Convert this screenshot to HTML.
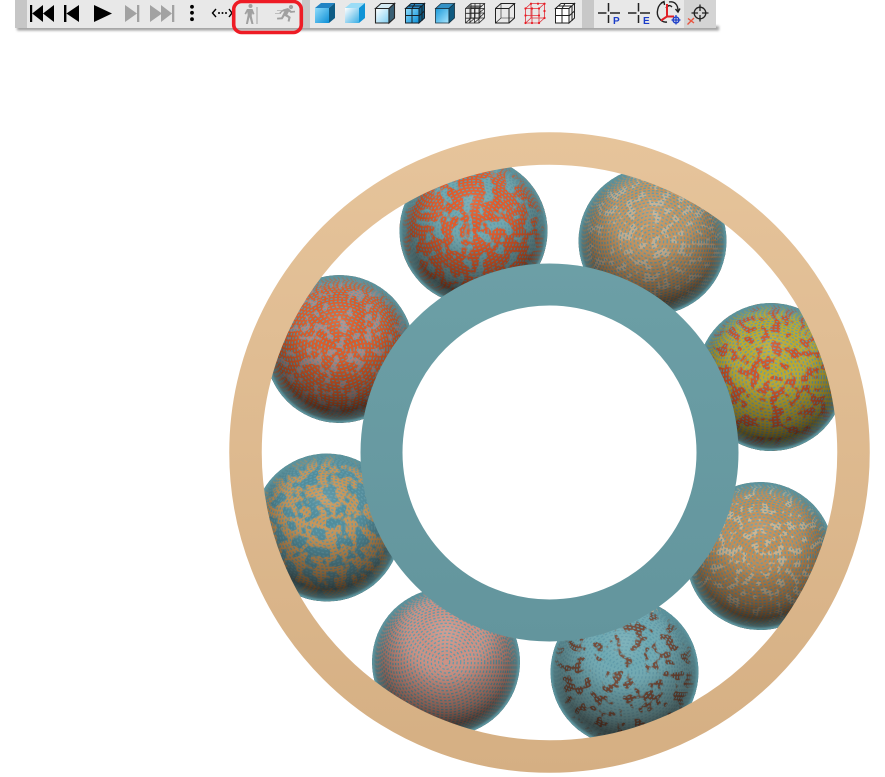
<!DOCTYPE html>
<html>
<head>
<meta charset="utf-8">
<style>
html,body{margin:0;padding:0;background:#fff;width:885px;height:777px;overflow:hidden}
svg{display:block}
</style>
</head>
<body>
<svg width="885" height="777" viewBox="0 0 885 777" xmlns="http://www.w3.org/2000/svg">
<defs>
  <linearGradient id="outer" gradientUnits="userSpaceOnUse" x1="0" y1="132" x2="0" y2="773"><stop offset="0" stop-color="#e6c49b"/><stop offset="1" stop-color="#d5af83"/></linearGradient>
  <linearGradient id="inner" gradientUnits="userSpaceOnUse" x1="0" y1="264" x2="0" y2="641"><stop offset="0" stop-color="#6c9fa6"/><stop offset="1" stop-color="#63959d"/></linearGradient>
  <radialGradient id="shade" cx=".5" cy=".3" r=".76">
    <stop offset="0" stop-color="#fff" stop-opacity=".12"/>
    <stop offset=".22" stop-color="#fff" stop-opacity="0"/>
    <stop offset=".45" stop-color="#1c0e06" stop-opacity=".14"/>
    <stop offset=".68" stop-color="#1c0e06" stop-opacity=".42"/>
    <stop offset=".85" stop-color="#140a04" stop-opacity=".72"/>
    <stop offset="1" stop-color="#0c0502" stop-opacity=".9"/>
  </radialGradient>
  <radialGradient id="rim" cx=".5" cy=".5" r=".5">
    <stop offset=".84" stop-color="#5b939d" stop-opacity="0"/>
    <stop offset=".95" stop-color="#5b939d" stop-opacity=".5"/>
    <stop offset=".985" stop-color="#5b939d" stop-opacity="1"/>
    <stop offset="1" stop-color="#5b939d" stop-opacity="1"/>
  </radialGradient>
  <g id="dashes" fill="none" stroke="#5f9aa9" stroke-width="1.3" stroke-dasharray="2.4 1.9">
    <circle r="3.7"/><circle r="7.4"/><circle r="11.1"/><circle r="14.7"/><circle r="18.3"/><circle r="21.9"/><circle r="25.4"/><circle r="28.8"/><circle r="32.2"/><circle r="35.5"/><circle r="38.7"/><circle r="41.8"/><circle r="44.8"/><circle r="47.7"/><circle r="50.4"/><circle r="53.1"/><circle r="55.6"/><circle r="58"/><circle r="60.2"/><circle r="62.3"/><circle r="64.2"/><circle r="65.9"/><circle r="67.5"/><circle r="69"/><circle r="70.2"/><circle r="71.3"/><circle r="72.2"/><circle r="72.9"/><circle r="73.5"/>
  </g>
  <clipPath id="ball"><circle r="74"/></clipPath>

  <filter id="b1" x="0" y="0" width="1" height="1" color-interpolation-filters="sRGB"><feTurbulence type="fractalNoise" baseFrequency=".095" numOctaves="2" seed="3"/><feColorMatrix values="0 0 0 0 .87 0 0 0 0 .35 0 0 0 0 .16 14 0 0 0 -5.7"/></filter>
  <filter id="b2" x="0" y="0" width="1" height="1" color-interpolation-filters="sRGB"><feTurbulence type="fractalNoise" baseFrequency=".12" numOctaves="2" seed="11"/><feColorMatrix values="0 0 0 0 .78 0 0 0 0 .68 0 0 0 0 .55 14 0 0 0 -7.6"/></filter>
  <filter id="b3" x="0" y="0" width="1" height="1" color-interpolation-filters="sRGB"><feTurbulence type="fractalNoise" baseFrequency=".1" numOctaves="2" seed="7"/><feColorMatrix values="0 0 0 0 .8 0 0 0 0 .32 0 0 0 0 .15 14 0 0 0 -7.2"/></filter>
  <filter id="b4" x="0" y="0" width="1" height="1" color-interpolation-filters="sRGB"><feTurbulence type="fractalNoise" baseFrequency=".12" numOctaves="2" seed="19"/><feColorMatrix values="0 0 0 0 .8 0 0 0 0 .69 0 0 0 0 .54 14 0 0 0 -7.6"/></filter>
  <filter id="b5" x="0" y="0" width="1" height="1" color-interpolation-filters="sRGB"><feTurbulence type="fractalNoise" baseFrequency=".1" numOctaves="2" seed="23"/><feColorMatrix values="0 0 0 0 .45 0 0 0 0 .29 0 0 0 0 .22 14 0 0 0 -7.6"/></filter>
  <filter id="b7" x="0" y="0" width="1" height="1" color-interpolation-filters="sRGB"><feTurbulence type="fractalNoise" baseFrequency=".1" numOctaves="2" seed="31"/><feColorMatrix values="0 0 0 0 .31 0 0 0 0 .55 0 0 0 0 .61 14 0 0 0 -6.8"/></filter>
  <filter id="b8" x="0" y="0" width="1" height="1" color-interpolation-filters="sRGB"><feTurbulence type="fractalNoise" baseFrequency=".12" numOctaves="2" seed="41"/><feColorMatrix values="0 0 0 0 .7 0 0 0 0 .53 0 0 0 0 .5 14 0 0 0 -7.7"/></filter>

  <linearGradient id="c1" x1="0" y1="0" x2="1" y2="1"><stop offset="0" stop-color="#8fdcfb"/><stop offset="1" stop-color="#0d8fd6"/></linearGradient>
  <linearGradient id="c2" x1="0" y1="0" x2="1" y2="1"><stop offset="0" stop-color="#ffffff"/><stop offset="1" stop-color="#3aaee4"/></linearGradient>
  <linearGradient id="c3" x1="0" y1="0" x2="1" y2="1"><stop offset="0" stop-color="#1b9ad9"/><stop offset="1" stop-color="#a9e6ff"/></linearGradient>
  <linearGradient id="c4" x1="0" y1="0" x2="1" y2="1"><stop offset="0" stop-color="#ffffff"/><stop offset="1" stop-color="#7fcdf0"/></linearGradient>
  <filter id="sh" x="-5%" y="-50%" width="110%" height="200%"><feGaussianBlur stdDeviation="1.3"/></filter>
</defs>

<!-- spheres -->
<g transform="translate(473.5,231)"><g clip-path="url(#ball)"><circle r="74" fill="#6fa7af"/><rect x="-74" y="-74" width="148" height="148" filter="url(#b1)"/><use href="#dashes"/><circle r="74" fill="url(#shade)"/><circle r="74" fill="url(#rim)"/></g></g>
<g transform="translate(652.5,241)"><g clip-path="url(#ball)"><circle r="74" fill="#c2935f"/><rect x="-74" y="-74" width="148" height="148" filter="url(#b2)"/><use href="#dashes"/><circle r="74" fill="url(#shade)"/><circle r="74" fill="url(#rim)"/></g></g>
<g transform="translate(771,377)"><g clip-path="url(#ball)"><circle r="74" fill="#bba72d"/><rect x="-74" y="-74" width="148" height="148" filter="url(#b3)"/><use href="#dashes"/><circle r="74" fill="url(#shade)"/><circle r="74" fill="url(#rim)"/></g></g>
<g transform="translate(760,556)"><g clip-path="url(#ball)"><circle r="74" fill="#c08c54"/><rect x="-74" y="-74" width="148" height="148" filter="url(#b4)"/><use href="#dashes"/><circle r="74" fill="url(#shade)"/><circle r="74" fill="url(#rim)"/></g></g>
<g transform="translate(624.5,672)"><g clip-path="url(#ball)"><circle r="74" fill="#6fa9b2"/><rect x="-74" y="-74" width="148" height="148" filter="url(#b5)"/><path d="M-72-28 Q-40-62 0-62 T60-72" fill="none" stroke="#e3bd92" stroke-width="7" stroke-dasharray="3 1.5"/><use href="#dashes"/><circle r="74" fill="url(#shade)"/><circle r="74" fill="url(#rim)"/></g></g>
<g transform="translate(446,662)"><g clip-path="url(#ball)"><circle r="74" fill="#cb9184"/><use href="#dashes"/><circle r="74" fill="url(#shade)"/><circle r="74" fill="url(#rim)"/></g></g>
<g transform="translate(327,527.5)"><g clip-path="url(#ball)"><circle r="74" fill="#c59458"/><rect x="-74" y="-74" width="148" height="148" filter="url(#b7)"/><use href="#dashes"/><circle r="74" fill="url(#shade)"/><circle r="74" fill="url(#rim)"/></g></g>
<g transform="translate(339.5,349)"><g clip-path="url(#ball)"><circle r="74" fill="#d85a28"/><rect x="-74" y="-74" width="148" height="148" filter="url(#b8)"/><use href="#dashes"/><circle r="74" fill="url(#shade)"/><circle r="74" fill="url(#rim)"/></g></g>

<!-- rings -->
<circle cx="549.5" cy="452.5" r="304" fill="none" stroke="url(#outer)" stroke-width="32.5"/>
<circle cx="549.5" cy="452.5" r="168" fill="none" stroke="url(#inner)" stroke-width="42"/>

<!-- toolbar -->
<rect x="17" y="26" width="702" height="4.500" fill="#888" opacity=".8" filter="url(#sh)"/>
<rect x="15" y="0" width="12" height="28" fill="#c6c6c6"/>
<rect x="27" y="0" width="275" height="28" fill="#e8e8e8"/>
<rect x="302" y="0" width="8" height="28" fill="#c8c8c8"/>
<rect x="310" y="0" width="272" height="28" fill="#e8e8e8"/>
<rect x="582" y="0" width="12" height="28" fill="#c8c8c8"/>
<rect x="594" y="0" width="90" height="28" fill="#e8e8e8"/>
<rect x="684" y="0" width="32" height="28" fill="#d4d4d4"/>

<!-- transport icons -->
<g fill="#000">
  <path d="M30 5h2.2v17H30zM32.200 13.500 43 5v17zM43 13.500 54 5v17z"/>
  <path d="M64 5h2.400v17H64zM66.400 13.500 79 5v17z"/>
  <path d="M94 5 112 13.500 94 22z"/>
  <circle cx="192" cy="6.800" r="1.900"/><circle cx="192" cy="12.800" r="1.900"/><circle cx="192" cy="19.200" r="1.900"/>
  <circle cx="219" cy="13" r="1"/><circle cx="222.500" cy="13" r="1"/><circle cx="226" cy="13" r="1"/>
</g>
<path d="M216 9 212.500 13 216 17M229 9 232 13 229 17" fill="none" stroke="#000" stroke-width="1.400"/>
<g fill="#a2a2a2">
  <path d="M125 5 137 13.500 125 22zM137 5h2.300v17H137z"/>
  <path d="M150 5 162 13.500 150 22zM161 5 172 13.500 161 22zM172 5h2.300v17H172z"/>
</g>

<!-- walker / runner -->
<g fill="#a0a0a0">
  <circle cx="250.500" cy="6" r="2"/>
  <path d="M247 9h5.500l2 5-1.800.6-.7-1.600-.3 3 1.800 8h-2l-2-7-1.600 7h-2l1.800-9-.4-3-1.300 2.500-1.500-.8z"/>
  <path d="M256.500 7h1v17h-1z"/>
  <circle cx="291" cy="7" r="2.100"/>
  <path d="M283 9.500l5-1.500 3.500 3 3.500-.3v1.700l-4.400.5-1.700-1.300-1.600 3 3.400 2.400-1.200 4.800-1.900-.5.700-3.400-3.600-2-2.200 3.300-5.300.3-.2-1.800 4.300-.3 3.100-6.200-2.300.6-1.400 2-1.400-1z"/>
  <path d="M275 13h6v1h-6zM277 10h5v1h-5z" opacity=".6"/>
</g>

<!-- red highlight -->
<rect x="233.700" y="1.500" width="67.600" height="31" rx="8" ry="8" fill="none" stroke="#ee1c25" stroke-width="3.600"/>

<!-- cube icons -->
<g transform="translate(315,3)"><path d="M0 5h14v15H0z" fill="url(#c1)"/><path d="M0 5 6 0H20L14 5z" fill="#2284c4"/><path d="M14 5 20 0V15L14 20z" fill="#0e5c85"/></g>
<g transform="translate(345,3)"><path d="M0 5h14v15H0z" fill="url(#c2)"/><path d="M0 5 6 0H20L14 5z" fill="#9adcf6"/><path d="M14 5 20 0V15L14 20z" fill="#0f93d6"/></g>
<g transform="translate(375,3)" stroke="#262626" stroke-width="1.100"><path d="M.5 5.500h13.500v14.500H.5z" fill="url(#c4)"/><path d="M.5 5.500 6 .5H19.500L14 5.500z" fill="#d4e9f2"/><path d="M14 5.500 19.500 .5V15L14 20z" fill="#395f74"/></g>
<g transform="translate(405,3)" stroke="#16222a" stroke-width="1"><path d="M.5 5.500h13.500v14.500H.5z" fill="url(#c1)"/><path d="M.5 5.500 6 .5H19.500L14 5.500z" fill="#2d8cc5"/><path d="M14 5.500 19.500 .5V15L14 20z" fill="#105d85"/><path d="M7 5.500V20M.5 12.500H14M3.500 3 17 3M10 .5 7 5.500M14 13 19.500 8M17 3V18" fill="none"/></g>
<g transform="translate(435,3)" stroke="#17313f" stroke-width=".8"><path d="M.5 5.500h13.500v14.500H.5z" fill="url(#c3)"/><path d="M.5 5.500 6 .5H19.500L14 5.500z" fill="#3391c5"/><path d="M14 5.500 19.500 .5V15L14 20z" fill="#0f5a80"/></g>
<g transform="translate(465,3)" fill="none" stroke="#222" stroke-width=".8"><path d="M.5 5.500h13.500V20H.5zM.5 5.500 6 .5H19.500L14 5.500M14 20 19.500 15V.5M.5 20 6 15H19.500M6 .5V15"/><path d="M5 5.500V20M9.500 5.500V20M.5 10.300H14M.5 15.200H14M3.500 3H17M2 4.200H15.500M10 .5V15M15 .5V15M6 5.500H19.500M6 10H19.500M4 20 10 15M9 20 15 15M14 10 19.500 5.500M14 15 19.500 10"/></g>
<g transform="translate(495,3)" fill="none" stroke="#222" stroke-width="1"><path d="M.5 5.500h13.500V20H.5zM.5 5.500 6 .5H19.500L14 5.500M14 20 19.500 15V.5"/><path d="M6 .5V15H19.500M6 15 .5 20" stroke-width=".6"/></g>
<g transform="translate(525,3)" fill="none" stroke="#e0303a" stroke-width=".8"><path d="M.5 5.500h13.500V20H.5zM.5 5.500 6 .5H19.500L14 5.500M14 20 19.500 15V.5M6 .5V15H19.500M6 15 .5 20M7 5.500V20M.5 12.500H14"/><g fill="#e81c24" stroke="none"><circle cx=".5" cy="5.500" r="1.100"/><circle cx="7" cy="5.500" r="1.100"/><circle cx="14" cy="5.500" r="1.100"/><circle cx=".5" cy="12.500" r="1.100"/><circle cx="14" cy="12.500" r="1.100"/><circle cx=".5" cy="20" r="1.100"/><circle cx="7" cy="20" r="1.100"/><circle cx="14" cy="20" r="1.100"/><circle cx="6" cy=".7" r="1.100"/><circle cx="13" cy=".7" r="1.100"/><circle cx="19.500" cy=".7" r="1.100"/><circle cx="19.500" cy="8" r="1.100"/><circle cx="19.500" cy="15" r="1.100"/></g></g>
<g transform="translate(555,3)" stroke="#222" stroke-width="1"><path d="M.5 5.500h13.500V20H.5z" fill="#fff"/><path d="M.5 5.500 6 .5H19.500L14 5.500z" fill="#fff"/><path d="M14 5.500 19.500 .5V15L14 20z" fill="#ededed"/><path d="M7 5.500V20M.5 12.500H14M3.500 3H17M10 .5 7 5.500M14 13 19.500 8M17 3V18" fill="none"/></g>

<!-- crosshair icons -->
<path d="M598 13h8.500M610 13h10M608.500 3v8.500M608.500 15v8" fill="none" stroke="#222" stroke-width="1.500"/>
<text x="613" y="24" font-family="'Liberation Sans',sans-serif" font-size="10" font-weight="700" fill="#1a3cc8">P</text>
<path d="M628 13h8.500M640 13h10M638.500 3v8.500M638.500 15v8" fill="none" stroke="#222" stroke-width="1.500"/>
<text x="643" y="24" font-family="'Liberation Sans',sans-serif" font-size="10" font-weight="700" fill="#1a3cc8">E</text>

<!-- rotate icon -->
<g fill="none" stroke="#222" stroke-width="1.400">
  <path d="M664 2C657 4 656 14 659 18c2 3 5 4.500 8 4"/>
  <path d="M661 3l3-1.500.5 3.500"/>
  <path d="M669 2c5-1 9 2 9 9"/>
  <path d="M675.500 9l2.500 3 2-3.500"/>
  <path d="M666 8c2-3 4-3 6-1"/>
</g>
<path d="M667 4v12.500l-6 4M667 16.500h7" fill="none" stroke="#e01f26" stroke-width="2"/>
<g stroke="#1a3cc8" fill="none"><circle cx="676" cy="20" r="3" stroke-width="1.300"/><path d="M676 15v9.500M671.500 20h9" stroke-width="1.200"/></g>

<!-- locate icon -->
<g fill="none" stroke="#222" stroke-width="1.300"><circle cx="700" cy="13" r="5.800"/><path d="M700 4.500v6.500M700 15v6.500M691.500 13h6.500M702 13h6.500"/></g>
<path d="M688 18.500l6 4.500M694 18l-6.500 6.500" fill="none" stroke="#e8543f" stroke-width="1.400"/>
</svg>
</body>
</html>
